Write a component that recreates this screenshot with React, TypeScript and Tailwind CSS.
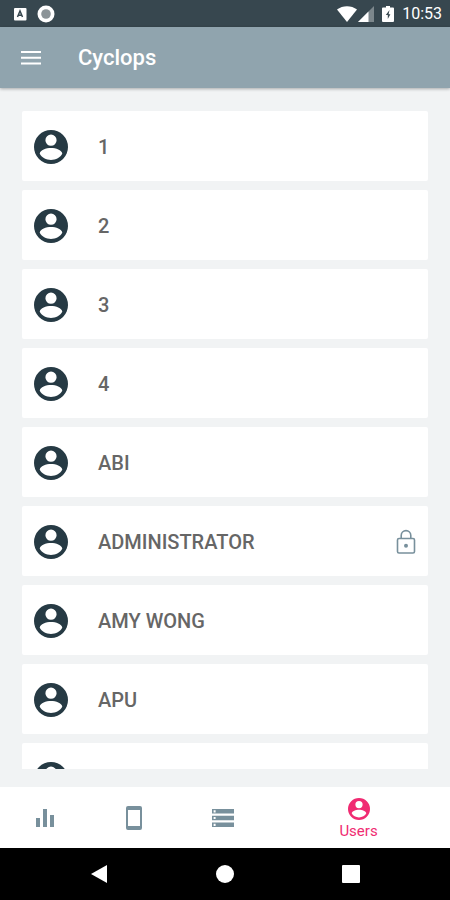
import type { ReactNode } from "react";

interface User {
  id: number;
  name: string;
  locked?: boolean;
}

interface IconProps {
  className?: string;
}

const users: User[] = [
  { id: 1, name: "1" },
  { id: 2, name: "2" },
  { id: 3, name: "3" },
  { id: 4, name: "4" },
  { id: 5, name: "ABI" },
  { id: 6, name: "ADMINISTRATOR", locked: true },
  { id: 7, name: "AMY WONG" },
  { id: 8, name: "APU" },
  { id: 9, name: "" },
];

const AccountIcon = ({ className }: IconProps) => (
  <svg viewBox="0 0 34 34" fill="currentColor" fillRule="evenodd" className={className} aria-hidden="true">
    <path d="M17 0a17 17 0 1 0 0 34a17 17 0 1 0 0-34zM17 4.600a5.600 5.600 0 1 1 0 11.200a5.600 5.600 0 1 1 0-11.200zM5.700 23.600C6.300 20 12 18 17 18s10.700 2 11.300 5.600C26.500 27.600 21.800 30 17 30S7.500 27.600 5.700 23.600z" />
  </svg>
);

const LockIcon = ({ className }: IconProps) => (
  <svg viewBox="0 0 20 26" fill="none" stroke="currentColor" className={className} aria-hidden="true">
    <rect x="1.5" y="9.5" width="17" height="14.500" rx="1.500" strokeWidth="1.600" />
    <path d="M5.200 9.500V6.400a4.800 4.800 0 0 1 9.600 0V9.500" strokeWidth="1.600" />
    <circle cx="10" cy="16.700" r="2" fill="currentColor" stroke="none" />
  </svg>
);

const StatsIcon = ({ className }: IconProps) => (
  <svg viewBox="0 0 18 18" fill="currentColor" className={className} aria-hidden="true">
    <path d="M0 9h4v9H0zM7 0h4v18H7zM14 6h4v12h-4z" />
  </svg>
);

const PhoneIcon = ({ className }: IconProps) => (
  <svg viewBox="0 0 16 24" fill="currentColor" fillRule="evenodd" className={className} aria-hidden="true">
    <path d="M2 0h12a2 2 0 0 1 2 2v20a2 2 0 0 1-2 2H2a2 2 0 0 1-2-2V2a2 2 0 0 1 2-2zM2 4v16h12V4z" />
  </svg>
);

const StorageIcon = ({ className }: IconProps) => (
  <svg viewBox="0 0 22 18" fill="currentColor" fillRule="evenodd" className={className} aria-hidden="true">
    <path d="M0 0h22v4.500H0zM1.600 1.200v2.200h2V1.200zM0 6.700h22v4.600H0zM1.600 7.900v2.200h2V7.900zM0 13.500h22V18H0zM1.600 14.700v2.200h2v-2.200z" />
  </svg>
);

const StatusBar = () => (
  <div className="flex h-[27px] shrink-0 items-center justify-between bg-[#37474f] pr-2 pl-3 text-white">
    <div className="flex items-center gap-2">
      <svg viewBox="0 0 16 16" className="size-4" aria-hidden="true">
        <rect x="2" y="2" width="12.500" height="12.500" rx="1" fill="#fff" />
        <path d="M5.500 11L8 5l2.500 6M6.500 9.300h3" fill="none" stroke="#37474f" strokeWidth="1.500" />
      </svg>
      <svg viewBox="0 0 20 20" className="size-5" aria-hidden="true">
        <circle cx="10" cy="10" r="8.500" fill="#fff" />
        <circle cx="10" cy="10" r="4.800" fill="#8b9397" />
      </svg>
    </div>
    <div className="flex items-center">
      <svg viewBox="0 0 20 16" fill="#fff" className="h-4 w-5" aria-hidden="true">
        <path d="M0 3.500C5.500-1 14.500-1 20 3.500L10 16z" />
      </svg>
      <svg viewBox="0 0 16 16" className="ml-px size-4" aria-hidden="true">
        <path d="M0 16L16 0v16z" fill="#fff" opacity=".35" />
        <path d="M0 16L10.500 5.500V16z" fill="#fff" />
      </svg>
      <svg viewBox="0 0 12 16" className="ml-2 h-4 w-3" aria-hidden="true">
        <path d="M4 0h4v1.600h3a1 1 0 0 1 1 1V15a1 1 0 0 1-1 1H1a1 1 0 0 1-1-1V2.600a1 1 0 0 1 1-1h3z" fill="#fff" />
        <path d="M7.500 4L3.800 9h2v4L8.400 8.300H6.600z" fill="#37474f" />
      </svg>
      <span className="ml-2 text-base leading-5">10:53</span>
    </div>
  </div>
);

const AppBar = () => (
  <header className="z-10 flex h-[61px] shrink-0 items-center gap-9 bg-[#90a4ae] px-5 pt-px text-white shadow-[0_1px_3px_rgba(0,0,0,0.3)]">
    <button type="button" aria-label="Menu">
      <svg viewBox="0 0 22 16" fill="currentColor" className="h-4 w-[22px]" aria-hidden="true">
        <path d="M1 1h20v2H1zM1 6.800h20v2H1zM1 12.600h20v2H1z" />
      </svg>
    </button>
    <h1 className="text-[22px] leading-7 font-medium">Cyclops</h1>
  </header>
);

const UserCard = ({ name, locked }: Omit<User, "id">) => (
  <li>
    <button
      type="button"
      className="flex h-[70px] w-full items-center rounded-xs bg-white px-3 pt-px text-left text-[#666]"
    >
      <AccountIcon className="size-[34px] text-[#263a44]" />
      <span className="ml-[30px] flex-1 text-xl font-medium">{name}</span>
      {locked && <LockIcon className="h-[26px] w-5 text-[#78909c]" />}
    </button>
  </li>
);

const Tab = ({ label, children }: { label: string; children: ReactNode }) => (
  <button
    type="button"
    aria-label={label}
    className="flex flex-[89] items-center justify-center text-[#78909c]"
  >
    {children}
  </button>
);

const App = () => {
  return (
    <div className="flex h-screen flex-col bg-[#f1f3f4] font-[Roboto,sans-serif]">
      <StatusBar />
      <AppBar />

      <main className="min-h-0 flex-1 px-[22px] pt-[23px] pb-[18px]">
        <ul className="flex h-full flex-col gap-[9px] overflow-hidden">
          {users.map(({ id, ...user }) => (
            <UserCard key={id} {...user} />
          ))}
        </ul>
      </main>

      <nav className="flex h-[61px] shrink-0 bg-white">
        <Tab label="Statistics">
          <StatsIcon className="size-[18px]" />
        </Tab>
        <Tab label="Devices">
          <PhoneIcon className="h-6 w-4" />
        </Tab>
        <Tab label="Storage">
          <StorageIcon className="h-[18px] w-[22px]" />
        </Tab>
        <button
          type="button"
          className="flex flex-[183] flex-col items-center justify-center gap-px pt-1 text-[#f02b72]"
        >
          <AccountIcon className="size-[22px]" />
          <span className="text-[15px] leading-5">Users</span>
        </button>
      </nav>

      <div className="flex h-[52px] shrink-0 items-center justify-center gap-[108px] bg-black text-white">
        <button type="button" aria-label="Back">
          <svg viewBox="0 0 18 18" fill="currentColor" className="size-[18px]" aria-hidden="true">
            <path d="M17 0v18L1 9z" />
          </svg>
        </button>
        <button type="button" aria-label="Home">
          <svg viewBox="0 0 18 18" fill="currentColor" className="size-[18px]" aria-hidden="true">
            <circle cx="9" cy="9" r="9" />
          </svg>
        </button>
        <button type="button" aria-label="Recent apps">
          <svg viewBox="0 0 18 18" fill="currentColor" className="size-[18px]" aria-hidden="true">
            <rect width="18" height="18" rx="1" />
          </svg>
        </button>
      </div>
    </div>
  );
};

export default App;
